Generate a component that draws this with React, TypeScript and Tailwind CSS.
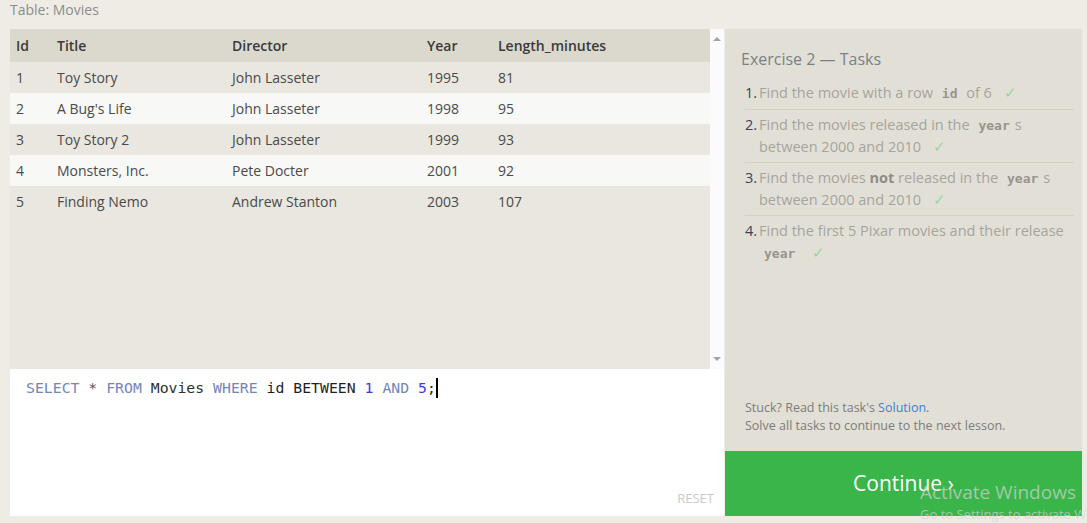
import React from "react";

type Movie = {
  id: number;
  title: string;
  director: string;
  year: number;
  length: number;
};

const movies: Movie[] = [
  { id: 1, title: "Toy Story", director: "John Lasseter", year: 1995, length: 81 },
  { id: 2, title: "A Bug's Life", director: "John Lasseter", year: 1998, length: 95 },
  { id: 3, title: "Toy Story 2", director: "John Lasseter", year: 1999, length: 93 },
  { id: 4, title: "Monsters, Inc.", director: "Pete Docter", year: 2001, length: 92 },
  { id: 5, title: "Finding Nemo", director: "Andrew Stanton", year: 2003, length: 107 },
];

const Check = () => <span className="ml-3 text-[#97d4a0]">✓</span>;

const Code = ({ children }: { children: React.ReactNode }) => (
  <code className="mx-[5px] font-['DejaVu_Sans_Mono',monospace] text-[13px] font-bold leading-none text-[#96948f]">
    {children}
  </code>
);

const TaskList = () => (
  <ol className="mt-[11px] flex flex-col leading-[22px]">
    <li className="flex border-b border-[#d4d2c7] pb-[5px]">
      <span className="w-[14px] shrink-0 text-[#3b3f5c]">1.</span>
      <span>
        Find the movie with a row <Code>id</Code> of 6
        <Check />
      </span>
    </li>
    <li className="flex border-b border-[#d4d2c7] py-[4px]">
      <span className="w-[14px] shrink-0 text-[#3b3f5c]">2.</span>
      <span>
        Find the movies released in the <Code>year</Code>s between 2000 and 2010
        <Check />
      </span>
    </li>
    <li className="flex border-b border-[#d4d2c7] py-[4px]">
      <span className="w-[14px] shrink-0 text-[#3b3f5c]">3.</span>
      <span>
        Find the movies <b className="text-[#8e8c87]">not</b> released in the <Code>year</Code>s between 2000 and 2010
        <Check />
      </span>
    </li>
    <li className="flex py-[4px]">
      <span className="w-[14px] shrink-0 text-[#3b3f5c]">4.</span>
      <span>
        Find the first 5 Pixar movies and their release <Code>year</Code>
        <Check />
      </span>
    </li>
  </ol>
);

export default function App() {
  return (
    <div className="relative h-[523px] w-[1087px] overflow-hidden bg-[#efece6] font-['Open_Sans',sans-serif] text-[14px]">
      <div className="h-[29px] pl-[10px] text-[14px] leading-[20px] text-[#8c8c8c]">Table: Movies</div>

      <div className="flex h-[487px] gap-px pl-[10px]">
        {/* left column: results + editor */}
        <div className="flex w-[714px] flex-col">
          <div className="flex h-[340px]">
            <div className="flex-1 bg-[#e9e7e0]">
              <div className="grid h-[33px] grid-cols-[41px_175px_195px_71px_1fr] items-center bg-[#dbd9cd] font-semibold text-[#3a3a3a]">
                <div className="pl-[6px]">Id</div>
                <div className="pl-[6px]">Title</div>
                <div className="pl-[6px]">Director</div>
                <div className="pl-[6px]">Year</div>
                <div className="pl-[6px]">Length_minutes</div>
              </div>
              {movies.map((m, i) => (
                <div
                  key={m.id}
                  className={`grid h-[31px] grid-cols-[41px_175px_195px_71px_1fr] items-center text-[#4a4a4a] ${
                    i % 2 === 1 ? "bg-[#f8f8f7]" : "bg-[#e9e7e0]"
                  }`}
                >
                  <div className="pl-[6px]">{m.id}</div>
                  <div className="pl-[6px]">{m.title}</div>
                  <div className="pl-[6px]">{m.director}</div>
                  <div className="pl-[6px]">{m.year}</div>
                  <div className="pl-[6px]">{m.length}</div>
                </div>
              ))}
            </div>
            <div className="flex w-[14px] flex-col items-center justify-between bg-[#fbfbfb] py-[8px]">
              <div className="h-0 w-0 border-x-[4px] border-b-[4px] border-x-transparent border-b-[#a3a3a3]" />
              <div className="h-0 w-0 border-x-[4px] border-t-[4px] border-x-transparent border-t-[#a3a3a3]" />
            </div>
          </div>

          <div className="relative flex-1 bg-white px-[16px] pt-[8px]">
            <div className="flex items-center whitespace-pre font-['DejaVu_Sans_Mono',monospace] text-[14.8px] leading-[22px]">
              <span className="text-[#7386b8]">SELECT</span>
              <span className="text-[#555]"> * </span>
              <span className="text-[#7386b8]">FROM</span>
              <span className="text-[#2f2f2f]"> Movies </span>
              <span className="text-[#7386b8]">WHERE</span>
              <span className="text-[#1f1f1f]"> id BETWEEN </span>
              <span className="text-[#3c3cd8]">1</span>
              <span className="text-[#7386b8]"> AND </span>
              <span className="text-[#3c3cd8]">5</span>
              <span className="text-[#1f1f1f]">;</span>
              <span className="h-[20px] w-[2px] bg-black" />
            </div>
            <div className="absolute bottom-[8px] right-[10px] text-[13px] text-[#c9c9c9]">RESET</div>
          </div>
        </div>

        {/* right column: tasks */}
        <div className="flex w-[357px] flex-col">
          <div className="flex flex-1 flex-col bg-[#e2e0d6] pl-[16px] pr-[8px] pt-[18px]">
            <h2 className="text-[16px] text-[#7b8088]">Exercise 2 — Tasks</h2>
            <div className="pl-[4px] text-[14.5px] text-[#a6a49e]">
              <TaskList />
            </div>
            <div className="mt-auto pb-[16px] pl-[4px] text-[12.5px] leading-[18px] text-[#7c7c7c]">
              <p>
                Stuck? Read this task's <span className="text-[#3f7fd6]">Solution</span>.
              </p>
              <p>Solve all tasks to continue to the next lesson.</p>
            </div>
          </div>
          <div className="flex h-[65px] items-center justify-center bg-[#39b54a] text-[21px] text-white">
            Continue ›
          </div>
        </div>
      </div>

      {/* OS watermark */}
      <div className="pointer-events-none absolute left-[920px] top-[479px] whitespace-nowrap font-['Open_Sans',sans-serif] text-[#d4d4d4]/70">
        <div className="text-[19px] leading-[26px]">Activate Windows</div>
        <div className="text-[13px] leading-[18px]">Go to Settings to activate Windows.</div>
      </div>
    </div>
  );
}
